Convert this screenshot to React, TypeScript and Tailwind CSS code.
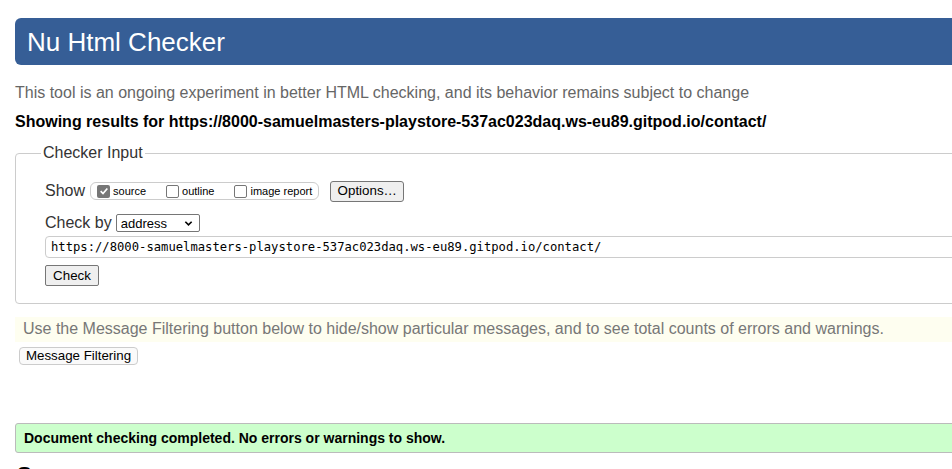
import React from "react";

const sans = { fontFamily: '"Liberation Sans", Arial, sans-serif' };

const Box = ({ checked }: { checked?: boolean }) =>
  checked ? (
    <span className="flex h-[13px] w-[13px] items-center justify-center rounded-[2px] bg-[#767676]">
      <svg viewBox="0 0 12 12" className="h-[10px] w-[10px]">
        <path d="M2 6.2 L4.8 9 L10 3" fill="none" stroke="#fff" strokeWidth="2" />
      </svg>
    </span>
  ) : (
    <span className="h-[13px] w-[13px] rounded-[2px] border border-[#767676] bg-white" />
  );

const Option = ({ label, checked, first }: { label: string; checked?: boolean; first?: boolean }) => (
  <label className={`flex items-center gap-[3px] ${first ? "" : "ml-[20px]"}`}>
    <Box checked={checked} />
    <span className="text-[11px] leading-[13px] text-black">{label}</span>
  </label>
);

const url = "https://8000-samuelmasters-playstore-537ac023daq.ws-eu89.gitpod.io/contact/";

export default function App() {
  return (
    <div className="h-[469px] w-[952px] overflow-hidden bg-white" style={sans}>
      <div className="w-[1000px] pl-[15px] pt-[18px]">
        {/* header */}
        <div className="flex h-[47px] items-center rounded-l-[6px] bg-[#365e96] pl-[12px]">
          <h1 className="text-[26px] leading-none text-white">Nu Html Checker</h1>
        </div>

        <p className="mt-[18px] text-[16px] leading-[20px] text-[#666]">
          This tool is an ongoing experiment in better HTML checking, and its behavior remains subject to change
        </p>
        <p className="mt-[9px] text-[16px] font-bold leading-[20px] text-black">
          Showing results for {url}
        </p>

        {/* checker input */}
        <fieldset className="mt-[11px] rounded-l-[4px] border border-[#ccc] p-0">
          <legend className="ml-[25px] px-[2px] text-[16px] leading-[20px] text-[#333]">Checker Input</legend>
          <div className="pb-[16px] pl-[29px] pt-[17px]">
            <div className="flex h-[22px] items-center">
              <span className="text-[16px] leading-[20px] text-[#333]">Show</span>
              <div className="ml-[5px] flex h-[18px] items-center rounded-[6px] border border-[#ccc] pl-[6px] pr-[6px]">
                <Option label="source" checked first />
                <Option label="outline" />
                <Option label="image report" />
              </div>
              <button className="ml-[11px] h-[21px] w-[74px] rounded-[3px] border border-[#767676] bg-[#efefef] text-[13.33px] leading-none text-black">
                Options…
              </button>
            </div>

            <div className="mt-[11px] flex h-[20px] items-center">
              <span className="text-[16px] leading-[20px] text-[#333]">Check by</span>
              <div className="ml-[4px] flex h-[18px] w-[84px] items-center justify-between rounded-[2px] border border-[#767676] pl-[4px] pr-[6px]">
                <span className="text-[13px] leading-none text-black">address</span>
                <svg viewBox="0 0 10 10" className="h-[9px] w-[9px]">
                  <path d="M1.5 3 L5 6.5 L8.5 3" fill="none" stroke="#000" strokeWidth="1.8" />
                </svg>
              </div>
            </div>

            <div className="mt-[3px] flex h-[22px] items-center rounded-l-[4px] border border-[#ccc] pl-[5px]">
              <span
                className="text-[12.2px] leading-none text-black"
                style={{ fontFamily: '"DejaVu Sans Mono", "Liberation Mono", monospace' }}
              >
                {url}
              </span>
            </div>

            <button className="mt-[7px] h-[21px] w-[54px] rounded-[2px] border border-[#767676] bg-[#efefef] text-[13.33px] leading-none text-black">
              Check
            </button>
          </div>
        </fieldset>

        {/* message filtering */}
        <div className="mt-[13px] flex h-[25px] items-center bg-[#fefef0] pl-[8px]">
          <span className="text-[16px] leading-[20px] text-[#777]">
            Use the Message Filtering button below to hide/show particular messages, and to see total counts of errors and warnings.
          </span>
        </div>
        <button className="ml-[4px] mt-[5px] h-[18px] w-[119px] rounded-[4px] border border-[#ccc] bg-[#fafafa] text-[13.33px] leading-none text-black">
          Message Filtering
        </button>

        {/* result */}
        <div className="mt-[56px] flex h-[30px] items-center rounded-l-[3px] border border-[#bbb] bg-[#ccffcc] pl-[8px]">
          <span className="text-[14px] font-bold leading-none text-black">
            Document checking completed. No errors or warnings to show.
          </span>
        </div>

        <h2 className="ml-[2px] mt-[9px] text-[22px] font-bold leading-[26px] text-black">Source</h2>
      </div>
    </div>
  );
}
